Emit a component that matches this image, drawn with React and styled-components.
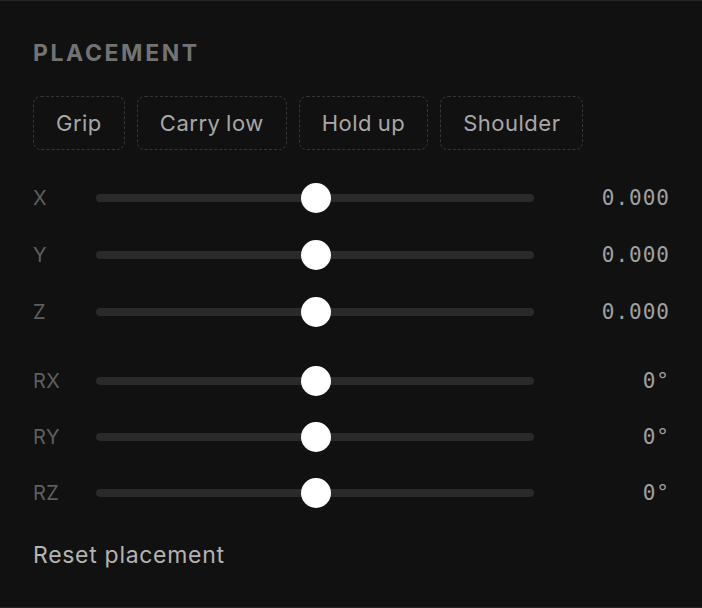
import React, { useState } from 'react'
import styled, { createGlobalStyle } from 'styled-components'

const GlobalStyle = createGlobalStyle`
  html, body {
    margin: 0;
    padding: 0;
    background: #111111;
  }
  * {
    box-sizing: border-box;
  }
`;

const Panel = styled.section`
  width: 702px;
  height: 608px;
  background: #111111;
  border-top: 1px solid #262626;
  border-bottom: 1px solid #262626;
  padding: 38px 33px 0 33px;
  font-family: Inter, "Noto Sans", sans-serif;
`;

const Title = styled.h2`
  margin: 0;
  font-size: 23px;
  line-height: 28px;
  font-weight: 700;
  letter-spacing: 2.6px;
  color: #737373;
`;

const Presets = styled.div`
  display: flex;
  gap: 12px;
  margin-top: 29px;
  margin-bottom: 19px;
`;

const PresetButton = styled.button`
  height: 54px;
  padding: 0 22px;
  background: transparent;
  border: 1.5px dashed #363636;
  border-radius: 8px;
  color: #a8a8a8;
  font-family: Inter, "Noto Sans", sans-serif;
  font-size: 22px;
  letter-spacing: 0.5px;
  word-spacing: -1px;
  cursor: pointer;
`;

const Group = styled.div`
  display: flex;
  flex-direction: column;
  margin-bottom: ${p => p.$gap || 0}px;
`;

const Row = styled.div`
  display: grid;
  grid-template-columns: 63px 438px 1fr;
  align-items: center;
  height: ${p => p.$h || 57}px;
`;

const Label = styled.span`
  font-size: 20px;
  color: #5f5f5f;
  letter-spacing: 0.5px;
`;

const Track = styled.div`
  position: relative;
  height: 8px;
  border-radius: 4px;
  background: #2a2a2a;
`;

const Thumb = styled.div`
  position: absolute;
  top: 50%;
  width: 30px;
  height: 30px;
  border-radius: 50%;
  background: #ffffff;
  transform: translate(-50%, -50%);
  margin-left: 1px;
`;

const Value = styled.span`
  text-align: right;
  font-family: "DejaVu Sans Mono", "Liberation Mono", monospace;
  font-size: 21px;
  letter-spacing: 1px;
  color: #a0a0a0;
  padding-right: 0;
  margin-right: -1px;
`;

const ResetButton = styled.button`
  margin-top: 20px;
  padding: 0;
  background: none;
  border: none;
  color: #b4b4b4;
  font-family: Inter, "Noto Sans", sans-serif;
  font-size: 23px;
  line-height: 28px;
  letter-spacing: 0.7px;
  cursor: pointer;
`;

const presets = ['Grip', 'Carry low', 'Hold up', 'Shoulder'];

const Slider = ({ label, value, min, max, format, h }) => {
  const pct = ((value - min) / (max - min)) * 100;
  return (
    <Row $h={h}>
      <Label>{label}</Label>
      <Track>
        <Thumb style={{ left: `${pct}%` }} />
      </Track>
      <Value>{format(value)}</Value>
    </Row>
  );
};

const App = () => {
  const [pos] = useState({ x: 0, y: 0, z: 0 });
  const [rot] = useState({ rx: 0, ry: 0, rz: 0 });

  const fmtPos = v => v.toFixed(3);
  const fmtRot = v => `${v}°`;

  return (
    <>
      <GlobalStyle />
      <Panel>
        <Title>PLACEMENT</Title>
        <Presets>
          {presets.map(p => (
            <PresetButton key={p}>{p}</PresetButton>
          ))}
        </Presets>
        <Group $gap={13}>
          <Slider label="X" value={pos.x} min={-1} max={1} format={fmtPos} />
          <Slider label="Y" value={pos.y} min={-1} max={1} format={fmtPos} />
          <Slider label="Z" value={pos.z} min={-1} max={1} format={fmtPos} />
        </Group>
        <Group>
          <Slider label="RX" value={rot.rx} min={-180} max={180} format={fmtRot} h={56} />
          <Slider label="RY" value={rot.ry} min={-180} max={180} format={fmtRot} h={56} />
          <Slider label="RZ" value={rot.rz} min={-180} max={180} format={fmtRot} h={56} />
        </Group>
        <ResetButton>Reset placement</ResetButton>
      </Panel>
    </>
  )
}

export default App
